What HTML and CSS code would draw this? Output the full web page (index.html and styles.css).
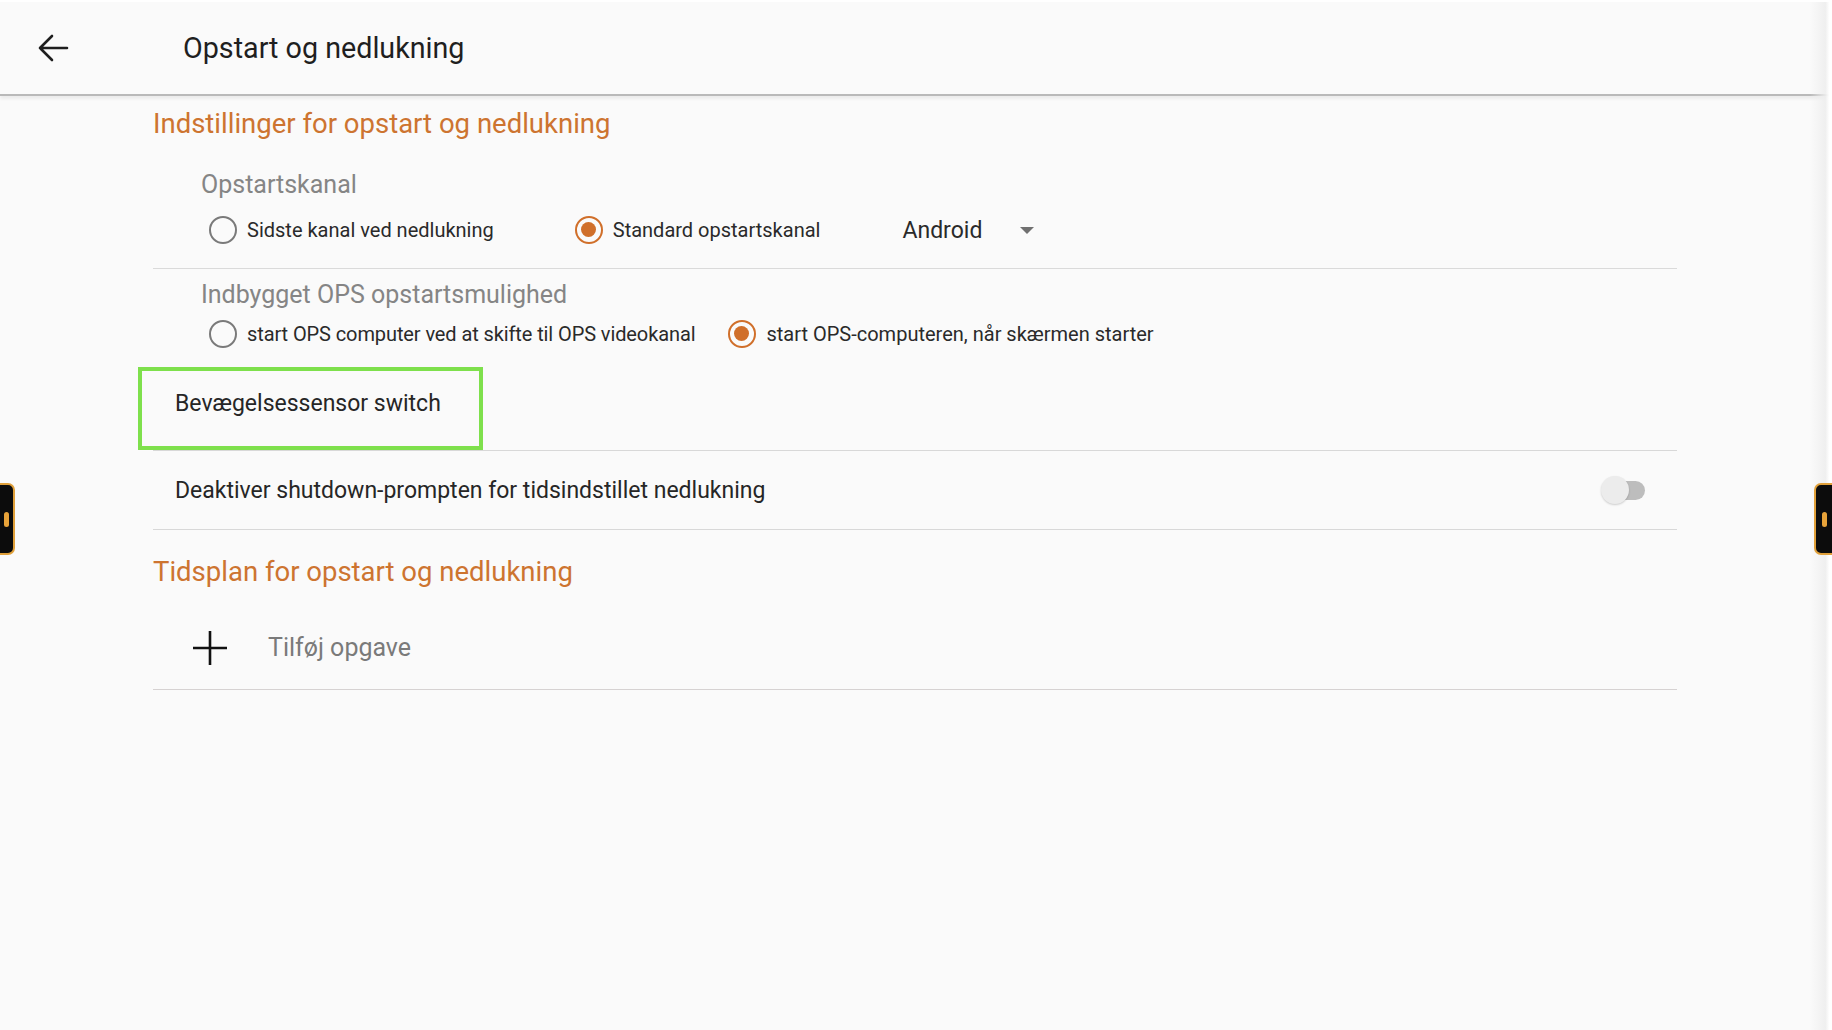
FILE: index.html
```html
<!DOCTYPE html>
<html>
    <head>
        <meta content="text/html;charset=utf-8" http-equiv="Content-Type" />
        <title>Opstart og nedlukning</title>
        <link rel="stylesheet" href="styles.css">
    </head>
    <body>
        <header class="topbar">
            <span class="back">
                <svg width="32" height="28" viewBox="0 0 32 28"><path d="M30 14H3M15 2L3 14l12 12" fill="none" stroke="#1e1e1e" stroke-width="2.6" stroke-linecap="round" stroke-linejoin="round"/></svg>
            </span>
            <h1 class="title">Opstart og nedlukning</h1>
        </header>

        <main class="content">
            <h2 class="section-title section-first">Indstillinger for opstart og nedlukning</h2>

            <div class="group group-first">
                <div class="group-label">Opstartskanal</div>
                <div class="radio-row">
                    <span class="option option-wide"><span class="radio"></span>Sidste kanal ved nedlukning</span>
                    <span class="option option-wide"><span class="radio checked"></span>Standard opstartskanal</span>
                    <span class="dropdown">Android<span class="caret"></span></span>
                </div>
            </div>

            <div class="group group-second">
                <div class="group-label">Indbygget OPS opstartsmulighed</div>
                <div class="radio-row">
                    <span class="option option-narrow"><span class="radio"></span>start OPS computer ved at skifte til OPS videokanal</span>
                    <span class="option"><span class="radio checked"></span>start OPS-computeren, når skærmen starter</span>
                </div>
            </div>

            <div class="row row-motion">
                <span class="row-text">Bevægelsessensor switch</span>
                <span class="highlight"></span>
            </div>

            <div class="row row-prompt">
                <span class="row-text">Deaktiver shutdown-prompten for tidsindstillet nedlukning</span>
                <span class="switch"><span class="thumb"></span></span>
            </div>

            <h2 class="section-title section-second">Tidsplan for opstart og nedlukning</h2>

            <div class="row row-add">
                <svg class="plus" width="36" height="36" viewBox="0 0 36 36"><path d="M18 1v34M1 18h34" stroke="#111" stroke-width="2.6"/></svg>
                <span class="add-text">Tilføj opgave</span>
            </div>
        </main>

        <span class="edge"></span>
        <span class="handle handle-left"><span class="pill"></span></span>
        <span class="handle handle-right"><span class="pill"></span></span>
    </body>
</html>
```

FILE: styles.css
```css
* {
    box-sizing: border-box;
}

html, body {
    margin: 0;
    height: 100%;
}

body {
    font-family: Roboto, "Noto Sans", sans-serif;
    background-color: #fafafa;
    color: #262626;
    position: relative;
    overflow: hidden;
    border-top: 2px solid #ffffff;
}

.topbar {
    height: 94px;
    display: flex;
    align-items: center;
    background-color: #fafafa;
    border-bottom: 2px solid #b9b9b9;
    box-shadow: 0 3px 3px rgba(0, 0, 0, 0.06);
}

.back {
    width: 183px;
    padding-left: 37px;
    display: flex;
    align-items: center;
}

.title {
    margin: 0;
    font-size: 28.7px;
    font-weight: 400;
    color: #1f1f1f;
}

.content {
    margin-left: 153px;
    width: 1524px;
}

.section-title {
    margin: 0;
    font-size: 27.5px;
    line-height: 36px;
    font-weight: 400;
    color: #cd7430;
}

.section-first {
    margin-top: 10px;
}

.section-second {
    margin-top: 24px;
}

.group {
    padding-left: 48px;
}

.group-first {
    padding-top: 28px;
    padding-bottom: 18px;
    border-bottom: 1px solid #dadada;
}

.group-second {
    padding-top: 11px;
    padding-bottom: 2px;
}

.group-label {
    font-size: 25px;
    line-height: 30px;
    color: #858585;
}

.radio-row {
    height: 40px;
    display: flex;
    align-items: center;
    margin-left: 8px;
    font-size: 20px;
    color: #2a2a2a;
}

.group-first .radio-row {
    margin-top: 10px;
}

.group-second .radio-row {
    margin-top: 4px;
}

.option {
    display: flex;
    align-items: center;
}

.option-wide {
    margin-right: 81px;
}

.option-narrow {
    margin-right: 33px;
    letter-spacing: -0.1px;
}

.radio {
    width: 28px;
    height: 28px;
    border-radius: 50%;
    border: 2.5px solid #7a7a7a;
    margin-right: 10px;
    position: relative;
}

.radio.checked {
    border-color: #d06f2a;
}

.radio.checked::after {
    content: "";
    position: absolute;
    left: 4px;
    top: 4px;
    width: 15px;
    height: 15px;
    border-radius: 50%;
    background-color: #d06f2a;
}

.dropdown {
    display: flex;
    align-items: center;
    font-size: 23px;
    color: #2a2a2a;
    margin-left: 1px;
}

.caret {
    width: 0;
    height: 0;
    margin-left: 38px;
    border-left: 7px solid transparent;
    border-right: 7px solid transparent;
    border-top: 7px solid #707070;
}

.row {
    display: flex;
    align-items: center;
    border-bottom: 1px solid #d8d8d8;
    position: relative;
}

.row-text {
    padding-left: 22px;
    font-size: 23px;
    color: #262626;
    flex: 1;
}

.row-motion {
    height: 95px;
}

.row-prompt {
    height: 79px;
    padding-right: 32px;
}

.highlight {
    position: absolute;
    left: -15px;
    top: 11px;
    width: 345px;
    height: 83px;
    border: 4px solid #7ee04c;
}

.switch {
    width: 44px;
    height: 28px;
    position: relative;
}

.switch::before {
    content: "";
    position: absolute;
    left: 8px;
    right: 0;
    top: 5px;
    height: 19px;
    border-radius: 10px;
    background-color: #bdbdbd;
}

.thumb {
    position: absolute;
    left: 0;
    top: 0;
    width: 28px;
    height: 28px;
    border-radius: 50%;
    background-color: #ececec;
    box-shadow: 0 1px 2px rgba(0, 0, 0, 0.18);
}

.row-add {
    height: 84px;
    margin-top: 16px;
    border-bottom-color: #d6d2d2;
}

.plus {
    margin-left: 39px;
}

.add-text {
    margin-left: 40px;
    font-size: 25px;
    color: #7a7a7a;
}

.handle {
    position: absolute;
    top: 481px;
    width: 17px;
    height: 72px;
    background-color: #0c0c0c;
    border: 2px solid #e0a03a;
    display: flex;
    align-items: center;
    justify-content: center;
}

.handle-left {
    left: -2px;
    border-radius: 0 7px 7px 0;
}

.handle-right {
    right: -2px;
    width: 20px;
    border-radius: 7px 0 0 7px;
}

.pill {
    width: 5px;
    height: 15px;
    border-radius: 3px;
    background-color: #e8a33a;
}

.edge {
    position: absolute;
    top: 0;
    right: 0;
    width: 22px;
    height: 100%;
    background: linear-gradient(to right, rgba(255, 255, 255, 0), rgba(238, 238, 238, 0.9) 70%, #ffffff 88%);
}
```
